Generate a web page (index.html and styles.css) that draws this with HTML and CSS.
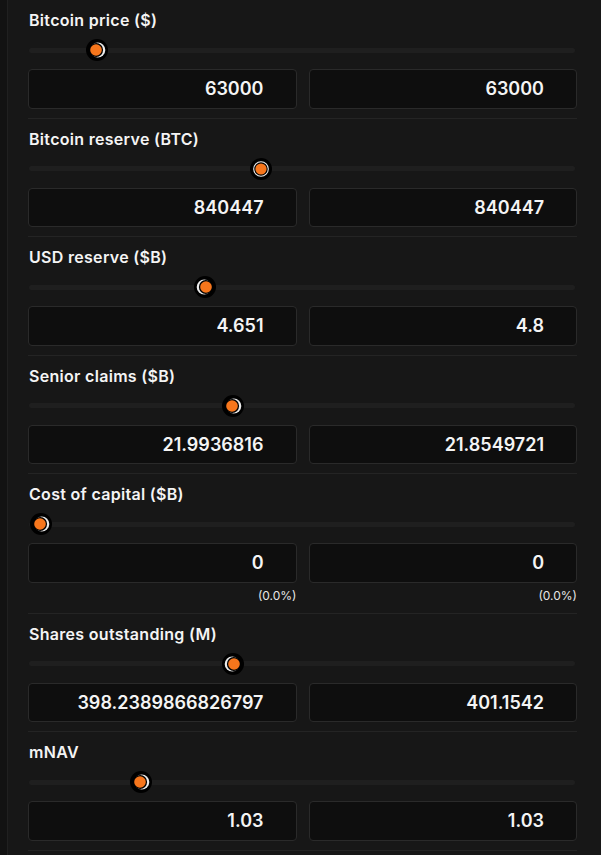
FILE: index.html
```html
<!DOCTYPE html>
<html lang="en">
<head>
<meta charset="utf-8">
<title>Parameters</title>
<link rel="stylesheet" href="styles.css">
</head>
<body>
<div class="panel">

  <section class="field">
    <div class="label">Bitcoin price ($)</div>
    <div class="slider">
      <div class="track"></div>
      <span class="thumb" style="left:68px"><svg viewBox="0 0 22 22" width="22" height="22"><circle cx="11" cy="11" r="11" fill="#000"/><circle cx="11.8" cy="11" r="7.5" fill="#ececec"/><circle cx="10.2" cy="11" r="6.9" fill="#000"/><circle cx="10" cy="11" r="5.8" fill="#f7761c"/></svg></span>
    </div>
    <div class="inputs"><div class="box">63000</div><div class="box">63000</div></div>
  </section>

  <section class="field">
    <div class="label">Bitcoin reserve (BTC)</div>
    <div class="slider">
      <div class="track"></div>
      <span class="thumb" style="left:232px"><svg viewBox="0 0 22 22" width="22" height="22"><circle cx="11" cy="11" r="11" fill="#000"/><circle cx="11" cy="11" r="7.3" fill="none" stroke="#ececec" stroke-width="1.1"/><circle cx="11" cy="11" r="5.6" fill="#f7761c"/></svg></span>
    </div>
    <div class="inputs"><div class="box">840447</div><div class="box">840447</div></div>
  </section>

  <section class="field">
    <div class="label">USD reserve ($B)</div>
    <div class="slider">
      <div class="track"></div>
      <span class="thumb flip" style="left:176px"><svg viewBox="0 0 22 22" width="22" height="22"><circle cx="11" cy="11" r="11" fill="#000"/><circle cx="11.8" cy="11" r="7.5" fill="#ececec"/><circle cx="10.2" cy="11" r="6.9" fill="#000"/><circle cx="10" cy="11" r="5.8" fill="#f7761c"/></svg></span>
    </div>
    <div class="inputs"><div class="box">4.651</div><div class="box">4.8</div></div>
  </section>

  <section class="field">
    <div class="label">Senior claims ($B)</div>
    <div class="slider">
      <div class="track"></div>
      <span class="thumb" style="left:204px"><svg viewBox="0 0 22 22" width="22" height="22"><circle cx="11" cy="11" r="11" fill="#000"/><circle cx="11.8" cy="11" r="7.5" fill="#ececec"/><circle cx="10.2" cy="11" r="6.9" fill="#000"/><circle cx="10" cy="11" r="5.8" fill="#f7761c"/></svg></span>
    </div>
    <div class="inputs"><div class="box">21.9936816</div><div class="box">21.8549721</div></div>
  </section>

  <section class="field">
    <div class="label">Cost of capital ($B)</div>
    <div class="slider">
      <div class="track"></div>
      <span class="thumb" style="left:12px"><svg viewBox="0 0 22 22" width="22" height="22"><circle cx="11" cy="11" r="11" fill="#000"/><circle cx="11.8" cy="11" r="7.5" fill="#ececec"/><circle cx="10.2" cy="11" r="6.9" fill="#000"/><circle cx="10" cy="11" r="5.8" fill="#f7761c"/></svg></span>
    </div>
    <div class="inputs">
      <div class="cell"><div class="box">0</div><div class="note">(0.0%)</div></div>
      <div class="cell"><div class="box">0</div><div class="note">(0.0%)</div></div>
    </div>
  </section>

  <section class="field">
    <div class="label">Shares outstanding (M)</div>
    <div class="slider">
      <div class="track"></div>
      <span class="thumb flip" style="left:204px"><svg viewBox="0 0 22 22" width="22" height="22"><circle cx="11" cy="11" r="11" fill="#000"/><circle cx="11.8" cy="11" r="7.5" fill="#ececec"/><circle cx="10.2" cy="11" r="6.9" fill="#000"/><circle cx="10" cy="11" r="5.8" fill="#f7761c"/></svg></span>
    </div>
    <div class="inputs"><div class="box">398.2389866826797</div><div class="box">401.1542</div></div>
  </section>

  <section class="field">
    <div class="label">mNAV</div>
    <div class="slider">
      <div class="track"></div>
      <span class="thumb" style="left:112px"><svg viewBox="0 0 22 22" width="22" height="22"><circle cx="11" cy="11" r="11" fill="#000"/><circle cx="11.8" cy="11" r="7.5" fill="#ececec"/><circle cx="10.2" cy="11" r="6.9" fill="#000"/><circle cx="10" cy="11" r="5.8" fill="#f7761c"/></svg></span>
    </div>
    <div class="inputs"><div class="box">1.03</div><div class="box">1.03</div></div>
  </section>

</div>
</body>
</html>
```

FILE: styles.css
```css
html, body {
  margin: 0;
  padding: 0;
  background: #121212;
}

body {
  font-family: Inter, "Noto Sans", "Liberation Sans", sans-serif;
  color: #f4f4f4;
}

.panel {
  margin-left: 7px;
  min-height: 855px;
  background: #171717;
  border-left: 1px solid #202020;
  padding: 0 24px 0 20px;
}

.field {
  padding: 10px 0 9px;
  border-bottom: 1px solid #242424;
}

.label {
  font-size: 16px;
  font-weight: 600;
  line-height: 20px;
  letter-spacing: 0.3px;
  padding-left: 1px;
  color: #f4f4f4;
}

.slider {
  position: relative;
  box-sizing: border-box;
  height: 22px;
  padding-top: 8.5px;
  margin: 9px 2px 8px 1px;
}

.track {
  height: 5px;
  border-radius: 3px;
  background: #1f1f1f;
}

.thumb {
  position: absolute;
  top: 0;
  width: 22px;
  height: 22px;
  transform: translateX(-50%);
}

.thumb svg {
  display: block;
}

.thumb.flip svg {
  transform: scaleX(-1);
}

.inputs {
  display: grid;
  grid-template-columns: 1fr 1fr;
  gap: 12px;
}

.box {
  height: 39.5px;
  box-sizing: border-box;
  display: flex;
  align-items: center;
  justify-content: flex-end;
  padding-right: 32px;
  background: #0e0e0e;
  border: 1px solid #2a2a2a;
  border-radius: 4px;
  font-size: 18px;
  font-weight: 600;
  color: #f4f4f4;
}

.note {
  margin-top: 5px;
  text-align: right;
  font-size: 12px;
  line-height: 16px;
  color: #e6e6e6;
}
```
